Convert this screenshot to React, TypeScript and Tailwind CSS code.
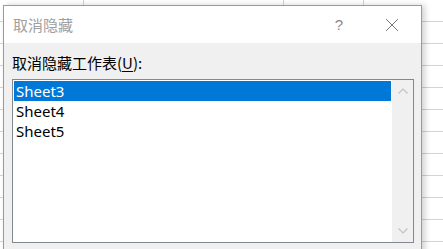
import React from "react";

export default function App() {
  const rows = Array.from({ length: 12 });
  return (
    <div className="relative w-[443px] h-[249px] overflow-hidden bg-white" style={{ fontFamily: '"Noto Sans", "Noto Sans CJK SC", sans-serif' }}>
      {/* spreadsheet grid */}
      <div className="absolute inset-0 flex flex-col">
        <div className="h-[1px] bg-[#d4d4d4]" />
        {rows.map((_, i) => (
          <div key={i} className="h-[22px] shrink-0 border-b border-[#d4d4d4]" />
        ))}
      </div>
      <div className="absolute left-[83px] top-0 h-full w-px bg-[#d4d4d4]" />
      <div className="absolute left-[283px] top-0 h-full w-px bg-[#d4d4d4]" />
      <div className="absolute left-[363px] top-0 h-full w-px bg-[#d4d4d4]" />

      {/* dialog */}
      <div className="absolute left-[3px] top-[5px] w-[419px] h-[260px] border border-[#9a9a9a] bg-[#f0f0f0] shadow-[3px_0_6px_rgba(0,0,0,0.18)] flex flex-col">
        <div className="h-[37px] bg-white flex items-center pl-[9px] pr-[22px] shrink-0">
          <span className="text-[15px] text-[#a0a0a0] tracking-[0px] leading-none" style={{ fontFamily: '"Noto Sans CJK SC", sans-serif' }}>取消隐藏</span>
          <span className="ml-auto text-[15px] text-[#8a8a8a] leading-none mr-[42px]" style={{ fontFamily: '"Liberation Sans", sans-serif' }}>?</span>
          <svg width="14" height="14" viewBox="0 0 14 14" className="mt-[1px]">
            <path d="M1 1 L13 13 M13 1 L1 13" stroke="#7a7a7a" strokeWidth="1" fill="none" />
          </svg>
        </div>
        <div className="flex flex-col pl-[8px] pr-[7px]">
          <div className="h-[36px] flex items-center pt-[3px] text-[15px] text-black leading-none" style={{ fontFamily: '"Noto Sans CJK SC", sans-serif' }}>
            取消隐藏工作表(<span className="underline underline-offset-2">U</span>):
          </div>
          <div className="h-[164px] border border-[#828790] bg-white flex">
            <div className="flex-1 flex flex-col p-px">
              <div className="h-[20px] bg-[#0078d7] text-white text-[15px] leading-[20px] pl-[2px]">Sheet3</div>
              <div className="h-[20px] text-black text-[15px] leading-[20px] pl-[2px]">Sheet4</div>
              <div className="h-[20px] text-black text-[15px] leading-[20px] pl-[2px]">Sheet5</div>
            </div>
            <div className="w-[21px] bg-[#f0f0f0] flex flex-col items-center justify-between py-[8px]">
              <svg width="10" height="6" viewBox="0 0 10 6"><path d="M0.5 5.5 L5 1 L9.5 5.5" stroke="#c2c2c2" strokeWidth="1.2" fill="none" /></svg>
              <svg width="10" height="6" viewBox="0 0 10 6"><path d="M0.5 0.5 L5 5 L9.5 0.5" stroke="#c2c2c2" strokeWidth="1.2" fill="none" /></svg>
            </div>
          </div>
        </div>
      </div>
    </div>
  );
}
